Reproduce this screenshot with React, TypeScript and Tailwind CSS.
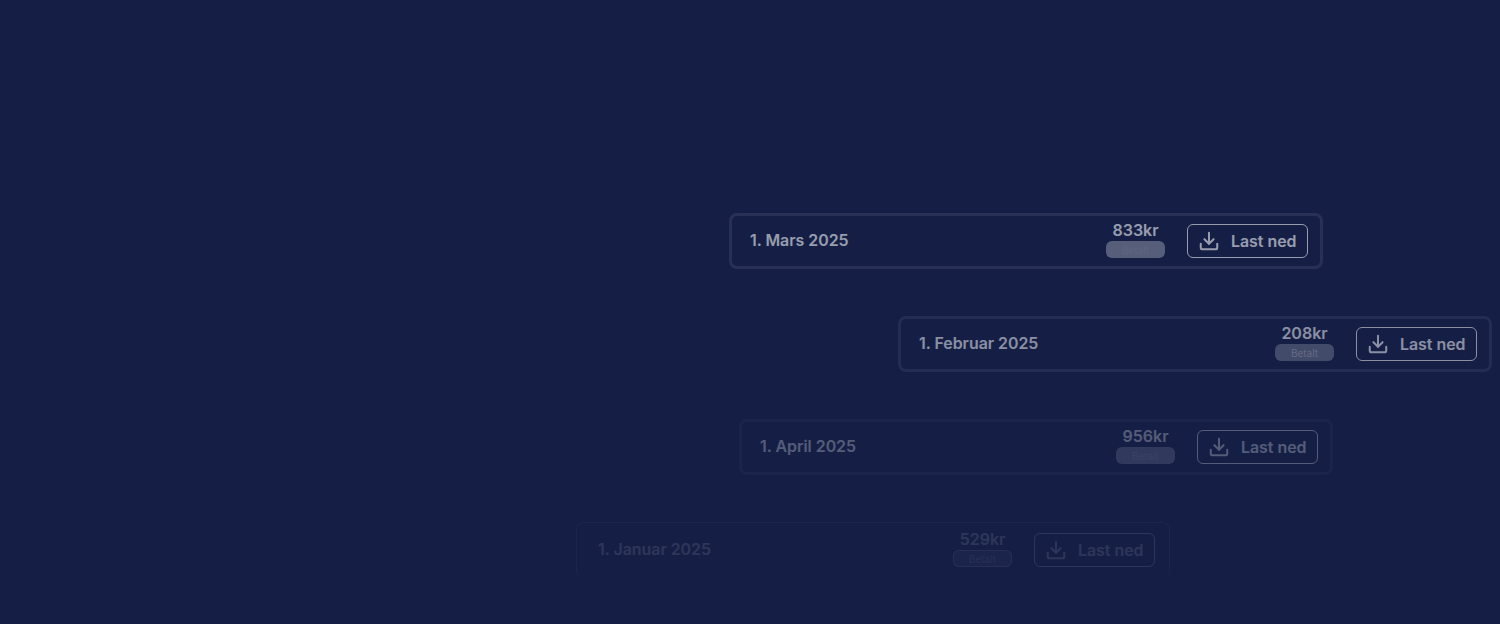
import React from 'react';
import { Download } from 'lucide-react';

type Invoice = {
  date: string;
  amount: string;
  offset: string;
  fade: string;
  frame: string;
  badge: string;
};

const invoices: Invoice[] = [
  { date: '1. Mars 2025', amount: '833kr', offset: 'ml-[729px]', fade: 'opacity-[0.56]', frame: 'border-[3px] border-white/15 pl-[18px] pr-[12px]', badge: 'bg-white/50 text-white/10' },
  { date: '1. Februar 2025', amount: '208kr', offset: 'ml-[898px]', fade: 'opacity-[0.5]', frame: 'border-[3px] border-white/12 pl-[18px] pr-[12px]', badge: 'bg-white/40 text-white/45' },
  { date: '1. April 2025', amount: '956kr', offset: 'ml-[739px]', fade: 'opacity-[0.27]', frame: 'border-[3px] border-white/10 pl-[18px] pr-[12px]', badge: 'bg-white/45 text-white/25' },
  { date: '1. Januar 2025', amount: '529kr', offset: 'ml-[576px]', fade: 'opacity-[0.1]', frame: 'border border-dotted border-white/60 border-b-transparent pl-[21px] pr-[14px]', badge: 'border border-white/60 bg-white/25 text-white/60' },
];

const InvoiceCard = ({ date, amount, offset, fade, frame, badge }: Invoice) => (
  <div
    className={`${offset} ${fade} ${frame} flex h-[56px] w-[594px] items-center justify-between rounded-lg text-white`}
  >
    <span className="text-[15.9px] font-semibold leading-none">{date}</span>
    <div className="flex items-center gap-[22px]">
      <div className="flex w-[59px] flex-col items-center">
        <span className="-translate-y-[2px] text-[16px] font-semibold leading-[19px]">{amount}</span>
        <span className={`${badge} flex h-[17px] w-[59px] -translate-y-[1px] items-center justify-center rounded-md text-[10px] leading-none`}>
          Betalt
        </span>
      </div>
      <button className="flex h-[34px] w-[121px] items-center gap-[11px] rounded-md border border-white pl-[10px]">
        <Download size={22} strokeWidth={2.2} />
        <span className="translate-y-[1px] text-[15.9px] font-semibold leading-none">Last ned</span>
      </button>
    </div>
  </div>
);

export default function App() {
  return (
    <div
      className="flex h-[624px] w-[1500px] flex-col gap-[47px] overflow-hidden bg-[#151f46] pt-[213px]"
      style={{ fontFamily: 'Inter, sans-serif' }}
    >
      {invoices.map((invoice) => (
        <InvoiceCard key={invoice.date} {...invoice} />
      ))}
    </div>
  );
}
